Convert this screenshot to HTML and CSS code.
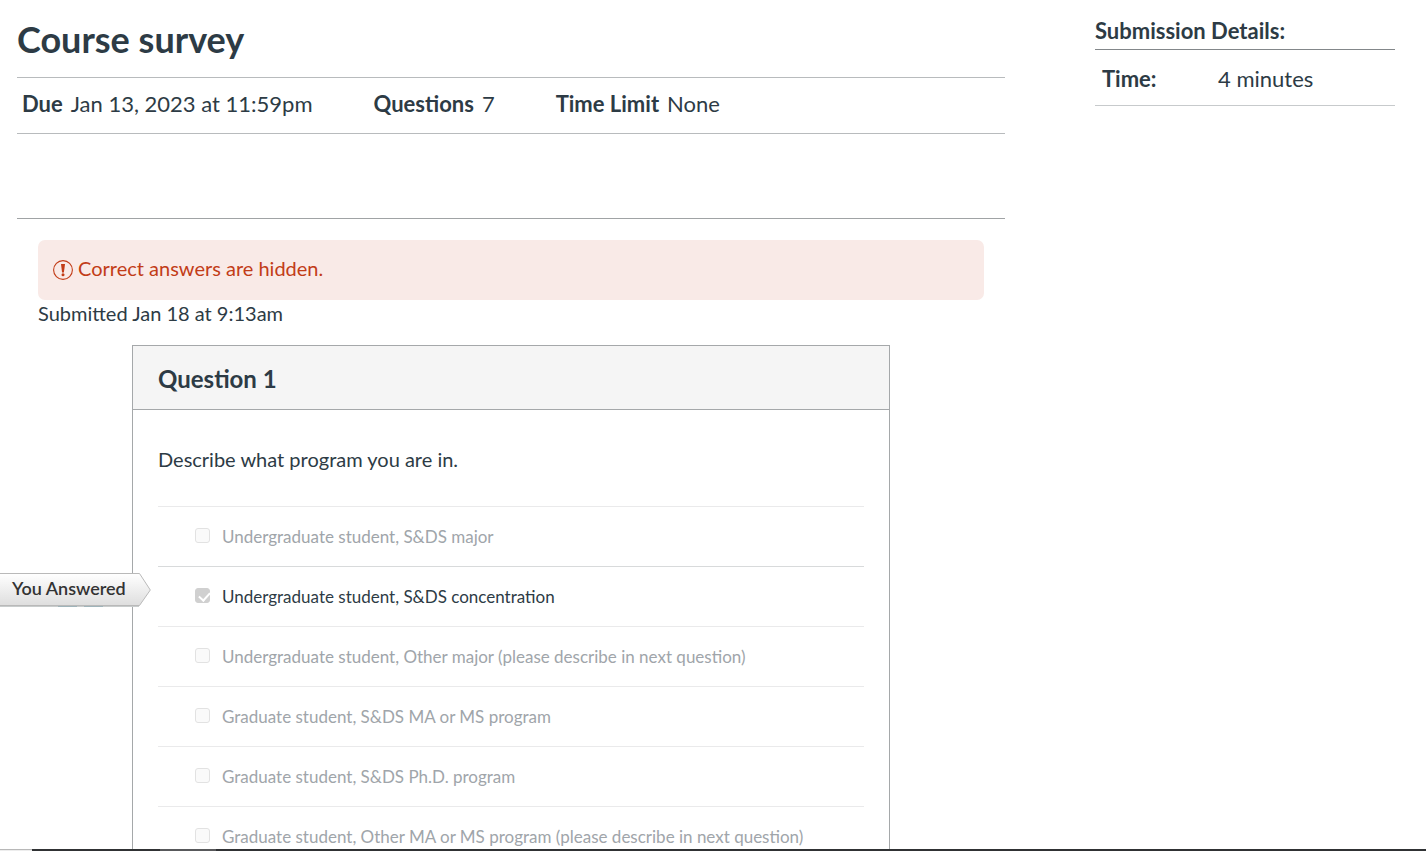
FILE: index.html
```html
<!DOCTYPE html>
<html lang="en">
<head>
<meta charset="utf-8">
<title>Course survey</title>
<link rel="stylesheet" href="styles.css">
</head>
<body>
<div class="page">
  <main class="content">
    <h1 class="title">Course survey</h1>
    <ul class="details">
      <li><b>Due</b><span>Jan 13, 2023 at 11:59pm</span></li>
      <li><b>Questions</b><span>7</span></li>
      <li><b>Time Limit</b><span>None</span></li>
    </ul>
    <section class="submission">
      <div class="alert">
        <svg class="alert-icon" viewBox="0 0 20 20" aria-hidden="true"><circle cx="10" cy="10" r="9.4" fill="none" stroke="currentColor" stroke-width="1.1"/><path d="M8 4h4l-1.1 8.400H9.100z" fill="currentColor"/><circle cx="10" cy="14.700" r="1.500" fill="currentColor"/></svg>
        <span>Correct answers are hidden.</span>
      </div>
      <p class="submitted">Submitted Jan 18 at 9:13am</p>
      <article class="question">
        <h2 class="question-title">Question 1</h2>
        <div class="question-body">
          <p class="question-text">Describe what program you are in.</p>
          <ul class="answers">
            <li class="answer"><label><input type="checkbox" disabled><span>Undergraduate student, S&amp;DS major</span></label></li>
            <li class="answer selected">
              <div class="flag">
                <svg class="flag-shape" viewBox="0 0 151 34" aria-hidden="true">
                  <defs><linearGradient id="flag-fill" x1="0" y1="0" x2="0" y2="1"><stop offset="0" stop-color="#fff"/><stop offset="1" stop-color="#dedede"/></linearGradient></defs>
                  <path d="M-2 .5H139.500L150.300 17 139.500 32.500H-2z" fill="url(#flag-fill)" stroke="#b9b9b9"/>
                  <path d="M0 33.500H139" stroke="#c8cccc"/>
                  <path d="M58 33.500H77M84 33.500H103" stroke="#9fb4ba"/>
                </svg>
                <span class="flag-text">You Answered</span>
              </div>
              <label><input type="checkbox" checked disabled><span>Undergraduate student, S&amp;DS concentration</span></label>
            </li>
            <li class="answer"><label><input type="checkbox" disabled><span>Undergraduate student, Other major (please describe in next question)</span></label></li>
            <li class="answer"><label><input type="checkbox" disabled><span>Graduate student, S&amp;DS MA or MS program</span></label></li>
            <li class="answer"><label><input type="checkbox" disabled><span>Graduate student, S&amp;DS Ph.D. program</span></label></li>
            <li class="answer"><label><input type="checkbox" disabled><span>Graduate student, Other MA or MS program (please describe in next question)</span></label></li>
          </ul>
        </div>
      </article>
    </section>
  </main>
  <aside class="sidebar">
    <h2 class="sidebar-title">Submission Details:</h2>
    <table class="summary"><tbody><tr><th scope="row">Time:</th><td>4 minutes</td></tr></tbody></table>
  </aside>
</div>
<div class="taskbar"><span class="taskbar-start"></span><span class="taskbar-item"></span></div>
</body>
</html>
```
FILE: styles.css
```css
* { box-sizing: border-box; }
body {
  margin: 0;
  height: 100vh;
  overflow: hidden;
  background: #fff;
  color: #2d3b45;
  font-family: Lato, sans-serif;
  font-size: 20px;
  line-height: 28px;
}
h1, h2, p, ul { margin: 0; padding: 0; }
ul { list-style: none; }
.page { display: flex; gap: 90px; padding: 0 31px 0 17px; }
.content { flex: 1; min-width: 0; }
.title { padding: 15px 0 14px; font-size: 36px; line-height: 48px; font-weight: 700; }
.details {
  display: flex;
  gap: 61px;
  height: 57px;
  padding: 12px 5px;
  border-top: 1px solid #b8bbbd;
  border-bottom: 1px solid #b8bbbd;
  font-size: 22px;
}
.details li { display: flex; gap: 8px; }
.submission {
  margin-top: 84px;
  padding: 21px 21px 0;
  border-top: 1px solid #a0a3a5;
}
.alert {
  display: flex;
  align-items: flex-start;
  gap: 5px;
  height: 60px;
  padding: 14px 15px;
  border-radius: 7px;
  background: #f9eae7;
  color: #c23c17;
}
.alert-icon { width: 20px; height: 20px; margin-top: 6px; }
.submitted { line-height: 26px; }
.question { margin: 19px 94px 0; border: 1px solid #a5a8aa; }
.question-title {
  height: 64px;
  padding: 19px 25px;
  border-bottom: 1px solid #a5a8aa;
  background: #f5f5f5;
  font-size: 24px;
}
.question-body { padding: 35px 25px; }
.answers { padding-top: 33px; }
.answer {
  position: relative;
  height: 60px;
  padding: 16px 37px;
  border-top: 1px solid #eaeaeb;
  color: #a0a5aa;
  font-size: 17px;
}
.answer.selected { border-color: #d8dadb; color: #2d3b45; }
.answer label { display: flex; gap: 12px; white-space: nowrap; }
.answer input {
  appearance: none;
  flex: none;
  width: 15px;
  height: 15px;
  margin: 5px 0;
  border: 1px solid #e2e2e2;
  border-radius: 3px;
  background: #fafafa;
}
.answer input:checked {
  border-color: #d0d0d0;
  background: #d0d0d0;
  position: relative;
}
.answer input:checked::after {
  content: "";
  position: absolute;
  left: 5px;
  top: 1px;
  width: 5px;
  height: 9px;
  border: solid #fff;
  border-width: 0 2px 2px 0;
  transform: rotate(42deg);
}
.flag { position: absolute; left: -158px; top: 6px; width: 151px; height: 34px; }
.flag-shape { display: block; width: 151px; height: 34px; }
.flag-text { position: absolute; left: 12px; top: 1px; color: #333; font-size: 18px; font-weight: 600; white-space: nowrap; }
.sidebar { width: 300px; padding-top: 17px; font-size: 22px; }
.sidebar-title { height: 33px; border-bottom: 1px solid #83878a; font-size: 22px; }
.summary { width: 100%; border-collapse: collapse; border-bottom: 1px solid #c7cacc; }
.summary th, .summary td { height: 55px; padding: 4px 7px 0; text-align: left; }
.summary th { width: 116px; }
.taskbar {
  position: fixed;
  inset: auto 0 0;
  display: flex;
  gap: 128px;
  height: 2px;
  background: #303234;
}
.taskbar-start { width: 32px; background: #ededed; border-top: 1px solid #b8b8b8; }
.taskbar-item { width: 56px; background: #58595b; }
```
